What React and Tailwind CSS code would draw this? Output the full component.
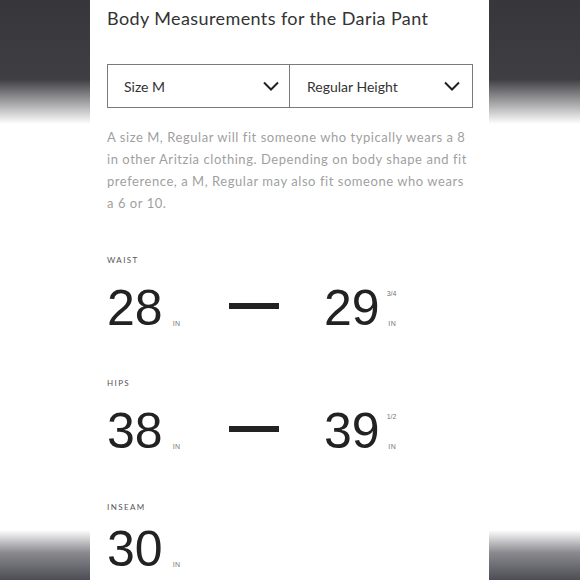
import React from 'react';

const Side = ({ className }) => (
  <div className={`flex flex-col justify-between h-full ${className}`}>
    <div className="h-[124px] bg-[linear-gradient(to_bottom,#37373b_0%,#3f3f43_64%,#ffffff_100%)]" />
    <div className="h-[50px] bg-[linear-gradient(to_bottom,#ffffff_0%,#8a8a90_45%,#4d4d55_100%)]" />
  </div>
);

const Chevron = () => (
  <svg width="16" height="10" viewBox="0 0 16 10" fill="none">
    <polyline points="1,1.5 8,8.5 15,1.5" stroke="#222" strokeWidth="2" />
  </svg>
);

const Num = ({ value, frac, first }) => (
  <div className={`flex ${first ? 'w-[122px]' : ''}`}>
    <span className="font-['Liberation_Sans',Arial,sans-serif] text-[50px] leading-none text-[#222]">
      {value}
    </span>
    <div
      className={`flex flex-col items-end justify-between h-[50px] pt-[7px] pb-[6px] font-['Liberation_Sans',Arial,sans-serif] text-[7px] leading-none text-[#777] ${
        first ? 'ml-[10px]' : 'ml-[7px]'
      }`}
    >
      <span>{frac || ''}</span>
      <span className="tracking-[0.5px]">IN</span>
    </div>
  </div>
);

const Label = ({ children, className }) => (
  <div className={`text-[8px] leading-none tracking-[1.4px] text-[#555] uppercase ${className}`}>
    {children}
  </div>
);

const Range = ({ from, to, frac, className }) => (
  <div className={`flex ${className}`}>
    <Num value={from} first />
    <div className="w-[50px] h-[6px] bg-[#222] mt-[20px]" />
    <div className="ml-[45px]">
      <Num value={to} frac={frac} />
    </div>
  </div>
);

export default function App() {
  return (
    <div className="flex w-[580px] h-[580px] overflow-hidden bg-white font-['Lato',sans-serif]">
      <Side className="w-[90px]" />

      <main className="w-[399px] pl-[17px]">
        <h1 className="pt-[6px] text-[18px] leading-[24px] tracking-[0.4px] text-[#333]">
          Body Measurements for the Daria Pant
        </h1>

        {/* Size selectors */}
        <div className="mt-[34px] w-[366px] h-[44px] grid grid-cols-2 border-[1.5px] border-[#7a7a7a] text-[14px] text-[#333]">
          <div className="flex items-center justify-between pl-[16px] pr-[10px] border-r-[1.5px] border-[#7a7a7a]">
            <span>Size M</span>
            <Chevron />
          </div>
          <div className="flex items-center justify-between pl-[17px] pr-[12px]">
            <span>Regular Height</span>
            <Chevron />
          </div>
        </div>

        <p className="mt-[18px] whitespace-nowrap text-[13px] leading-[22px] text-[#9f9f9f] tracking-[0.55px]">
          A size M, Regular will fit someone who typically wears a 8
          <br />
          in other Aritzia clothing. Depending on body shape and fit
          <br />
          preference, a M, Regular may also fit someone who wears
          <br />a 6 or 10.
        </p>

        <Label className="mt-[42px]">Waist</Label>
        <Range from="28" to="29" frac="3/4" className="mt-[19px]" />

        <Label className="mt-[46px]">Hips</Label>
        <Range from="38" to="39" frac="1/2" className="mt-[19px]" />

        <Label className="mt-[47px]">Inseam</Label>
        <div className="mt-[13px]">
          <Num value="30" first />
        </div>
      </main>

      <Side className="flex-1" />
    </div>
  );
}
